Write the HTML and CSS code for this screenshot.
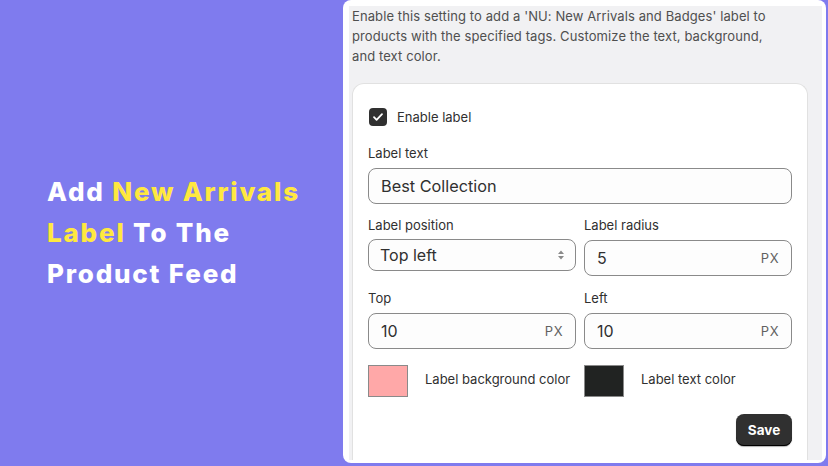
FILE: index.html
```html
<!DOCTYPE html>
<html>
<head>
    <meta charset="UTF-8">
    <title>New Arrivals Label</title>
    <link rel="stylesheet" href="styles.css">
</head>
<body>
    <div class="hero">
        <h1 class="hero-title"><span>Add</span> <span class="hl">New Arrivals</span> <span class="hl">Label</span> <span>To The</span> <span>Product Feed</span></h1>
    </div>

    <div class="panel">
        <div class="panel-inner">
            <p class="desc">Enable this setting to add a 'NU: New Arrivals and Badges' label to products with the specified tags. Customize the text, background, and text color.</p>

            <div class="card">
                <label class="check-row">
                    <span class="checkbox">
                        <svg width="12" height="12" viewBox="0 0 12 12"><path d="M2 6.2l2.6 2.6L10 3.2" fill="none" stroke="#fff" stroke-width="1.8" stroke-linecap="round" stroke-linejoin="round"/></svg>
                    </span>
                    Enable label
                </label>

                <div class="field field-first">
                    <div class="field-label">Label text</div>
                    <div class="input input-lg">Best Collection</div>
                </div>

                <div class="grid">
                    <div class="field">
                        <div class="field-label">Label position</div>
                        <div class="input select">
                            <span>Top left</span>
                            <svg width="8" height="12" viewBox="0 0 8 12"><path d="M4 1.5L7 5H1z M4 10.5L1 7h6z" fill="#8a8a8a"/></svg>
                        </div>
                    </div>
                    <div class="field">
                        <div class="field-label">Label radius</div>
                        <div class="input"><span>5</span><span class="suffix">PX</span></div>
                    </div>
                </div>

                <div class="grid grid-2">
                    <div class="field">
                        <div class="field-label">Top</div>
                        <div class="input"><span>10</span><span class="suffix">PX</span></div>
                    </div>
                    <div class="field">
                        <div class="field-label">Left</div>
                        <div class="input"><span>10</span><span class="suffix">PX</span></div>
                    </div>
                </div>

                <div class="grid colors">
                    <div class="color-item">
                        <span class="swatch swatch-pink"></span>
                        <span class="color-name">Label background color</span>
                    </div>
                    <div class="color-item">
                        <span class="swatch swatch-dark"></span>
                        <span class="color-name">Label text color</span>
                    </div>
                </div>

                <div class="actions">
                    <button class="save-btn">Save</button>
                </div>
            </div>
        </div>
    </div>
</body>
</html>
```

FILE: styles.css
```css
* {
    box-sizing: border-box;
    margin: 0;
    padding: 0;
}

body {
    width: 828px;
    height: 466px;
    overflow: hidden;
    background: #7f7bee;
    display: flex;
    font-family: Inter, "Liberation Sans", sans-serif;
    color: #303030;
}

.hero {
    width: 343px;
    display: flex;
    align-items: center;
    padding-left: 47px;
    padding-bottom: 2px;
}

.hero-title {
    color: #fff;
    font-size: 26px;
    font-weight: 800;
    letter-spacing: 1.8px;
    line-height: 41px;
    width: 264px;
}

.hero-title .hl {
    color: #ffe83f;
}

.panel {
    width: 483px;
    height: 463px;
    background: #fff;
    border-radius: 8px;
    padding: 6px 4px 3px 6px;
}

.panel-inner {
    height: 100%;
    background: #f1f1f3;
    padding: 0 14px 0 3px;
    display: flex;
    flex-direction: column;
}

.desc {
    font-size: 13px;
    line-height: 20px;
    letter-spacing: 0.1px;
    color: #4f4f4f;
    width: 425px;
}

.card {
    flex: 1;
    margin-top: 17px;
    background: #fff;
    border: 1px solid #e1e1e1;
    border-bottom: none;
    border-radius: 12px 12px 0 0;
    padding: 24px 15px 0;
    font-size: 13px;
}

.check-row {
    display: flex;
    align-items: center;
    gap: 10px;
    height: 18px;
    font-size: 13px;
}

.checkbox {
    width: 18px;
    height: 18px;
    margin-left: 1px;
    border-radius: 4px;
    background: #303030;
    display: flex;
    align-items: center;
    justify-content: center;
}

.field-first {
    margin-top: 17px;
}

.field-label {
    line-height: 20px;
    margin-bottom: 5px;
}

.input {
    height: 36px;
    border: 1px solid #8a8a8a;
    border-radius: 8px;
    background: #fdfdfd;
    display: flex;
    align-items: center;
    justify-content: space-between;
    padding: 0 12px;
    font-size: 16px;
}

.input-lg {
    font-size: 16.3px;
}

.select {
    height: 32px;
    padding: 0 10px 0 11px;
    margin-top: -1px;
}

.suffix {
    font-size: 13px;
    color: #616161;
    letter-spacing: 0.5px;
}

.grid {
    display: grid;
    grid-template-columns: 1fr 1fr;
    gap: 8px;
    margin-top: 11px;
}

.grid-2 {
    margin-top: 12px;
}

.colors {
    margin-top: 16px;
}

.color-item {
    display: flex;
    align-items: center;
    gap: 17px;
}

.color-name {
    padding-bottom: 4px;
}

.swatch {
    width: 40px;
    height: 32px;
    border: 1px solid #8a8a8a;
}

.swatch-pink {
    background: #ffa8a8;
}

.swatch-dark {
    background: #212322;
}

.actions {
    display: flex;
    justify-content: flex-end;
    margin-top: 17px;
}

.save-btn {
    width: 56px;
    height: 32px;
    background: #303030;
    color: #fff;
    border: none;
    border-radius: 8px;
    font-family: inherit;
    font-size: 13.5px;
    font-weight: 700;
    box-shadow: inset 0 -1px 0 #000, 0 1px 1px rgba(0,0,0,0.3);
}
```
